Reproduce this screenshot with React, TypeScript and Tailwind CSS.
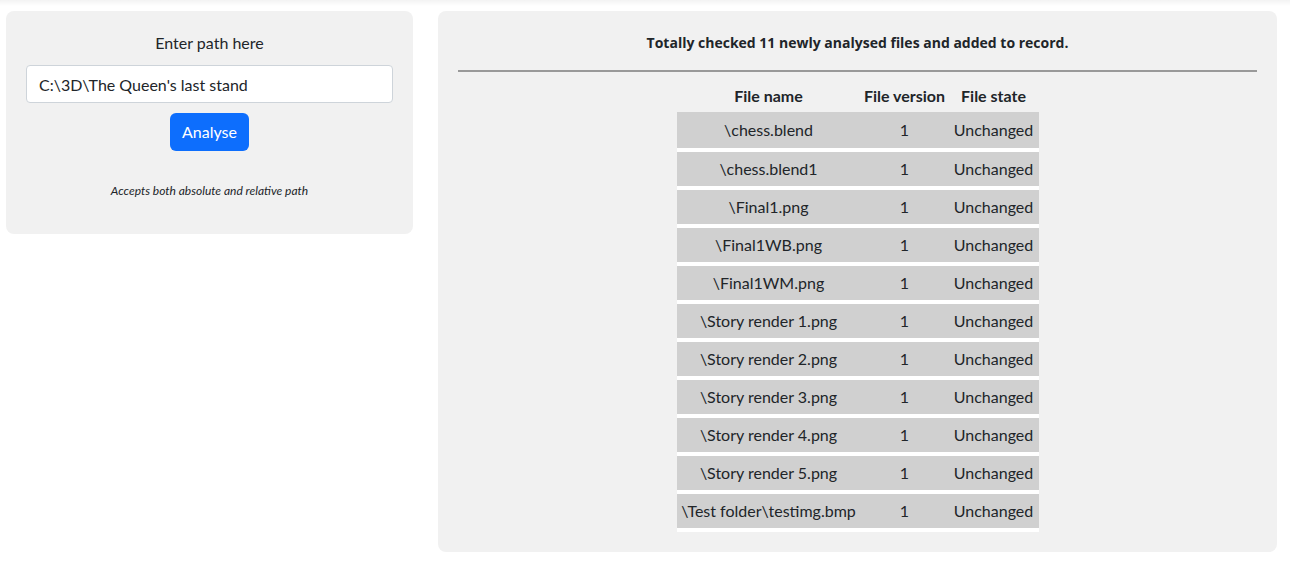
import React from 'react';

const files = [
  '\\chess.blend',
  '\\chess.blend1',
  '\\Final1.png',
  '\\Final1WB.png',
  '\\Final1WM.png',
  '\\Story render 1.png',
  '\\Story render 2.png',
  '\\Story render 3.png',
  '\\Story render 4.png',
  '\\Story render 5.png',
  '\\Test folder\\testimg.bmp',
];

export default function App() {
  return (
    <div className="min-h-screen bg-white text-[#212529] font-['Segoe_UI','Lato',sans-serif]">
      <div className="h-[6px] bg-gradient-to-b from-[#f3f3f3] to-white" />
      <div className="flex items-start gap-[25px] pl-[6px] pt-[5px]">
        {/* input panel */}
        <div className="w-[407px] h-[223px] rounded-lg bg-[#f1f1f1] px-5 pt-5 flex flex-col items-center">
          <p className="text-base leading-6">Enter path here</p>
          <input
            className="mt-[10px] w-full h-[38px] rounded bg-white border border-[#ced4da] px-3 text-base outline-none"
            defaultValue="C:\3D\The Queen's last stand"
          />
          <button className="mt-[10px] h-[38px] px-3 rounded-md bg-[#0d6efd] text-white text-base">
            Analyse
          </button>
          <p className="mt-[31px] text-xs italic leading-[18px]">Accepts both absolute and relative path</p>
        </div>

        {/* results panel */}
        <div className="w-[839px] rounded-lg bg-[#f1f1f1] px-5 pt-[22px] pb-5">
          <p className="text-center text-sm font-bold leading-5 font-['Open_Sans',sans-serif]">
            Totally checked 11 newly analysed files and added to record.
          </p>
          <hr className="mt-[17px] mb-[11px] border-t-2 border-[#999]" />
          <table className="mx-auto text-base border-collapse">
            <thead>
              <tr className="h-[29px]">
                <th className="w-[184px] pb-[3px] font-bold whitespace-nowrap">File name</th>
                <th className="w-[88px] pb-[3px] font-bold whitespace-nowrap">File version</th>
                <th className="w-[90px] pb-[3px] font-bold whitespace-nowrap">File state</th>
              </tr>
            </thead>
            <tbody>
              {files.map((f) => (
                <tr key={f} className="h-[38px] border-b-4 border-white bg-[#d0d0d0]">
                  <td className="px-1 text-center whitespace-nowrap">{f}</td>
                  <td className="px-1 text-center">1</td>
                  <td className="px-1 text-center">Unchanged</td>
                </tr>
              ))}
            </tbody>
          </table>
        </div>
      </div>
    </div>
  );
}
